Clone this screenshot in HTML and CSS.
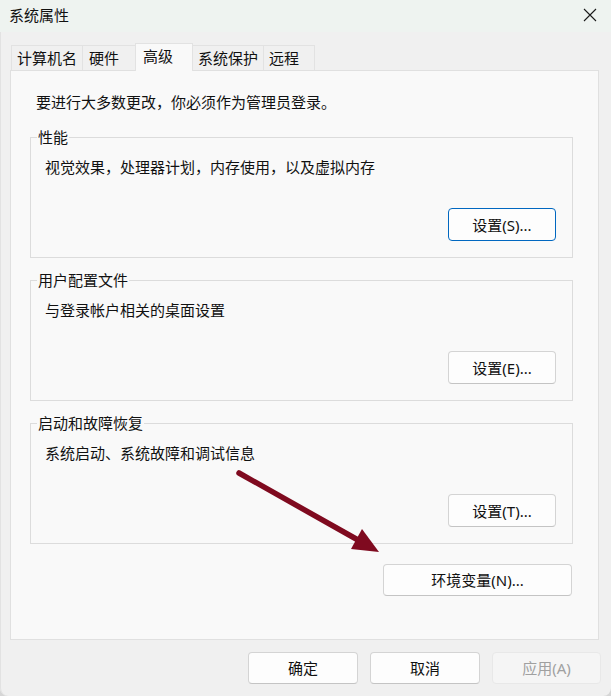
FILE: index.html
```html
<!DOCTYPE html>
<html lang="zh-CN">
<head>
<meta charset="utf-8">
<title>系统属性</title>
<link rel="stylesheet" href="styles.css">
</head>
<body>
<div class="window">
  <div class="titlebar">
    <span class="title">系统属性</span>
    <span class="close" aria-label="关闭">
      <svg width="14" height="14" viewBox="0 0 14 14"><path d="M1 1 L13 13 M13 1 L1 13" stroke="#1a1a1a" stroke-width="1.1" fill="none"/></svg>
    </span>
  </div>
  <div class="tabs">
    <div class="tab">计算机名</div>
    <div class="tab">硬件</div>
    <div class="tab active">高级</div>
    <div class="tab">系统保护</div>
    <div class="tab">远程</div>
  </div>
  <div class="panel">
    <p class="intro">要进行大多数更改，你必须作为管理员登录。</p>
    <fieldset class="group">
      <legend>性能</legend>
      <p class="desc">视觉效果，处理器计划，内存使用，以及虚拟内存</p>
      <div class="actions"><button class="btn setting default">设置(S)...</button></div>
    </fieldset>
    <fieldset class="group">
      <legend>用户配置文件</legend>
      <p class="desc">与登录帐户相关的桌面设置</p>
      <div class="actions"><button class="btn setting">设置(E)...</button></div>
    </fieldset>
    <fieldset class="group">
      <legend>启动和故障恢复</legend>
      <p class="desc">系统启动、系统故障和调试信息</p>
      <div class="actions"><button class="btn setting">设置(T)...</button></div>
    </fieldset>
    <div class="env-row"><button class="btn env">环境变量(N)...</button></div>
  </div>
  <div class="footer">
    <button class="btn dlg">确定</button>
    <button class="btn dlg">取消</button>
    <button class="btn dlg disabled">应用(A)</button>
  </div>
  <svg class="arrow" width="611" height="696" viewBox="0 0 611 696">
    <line x1="239" y1="473" x2="358" y2="540" stroke="#7f0a1f" stroke-width="5.5" stroke-linecap="round"/>
    <polygon points="379,552 351,549 362,529" fill="#7f0a1f"/>
  </svg>
</div>
</body>
</html>
```
FILE: styles.css
```css
html, body {
  margin: 0;
  padding: 0;
  background: #d6d6d6;
}
body {
  font-family: "Noto Sans", "Noto Sans CJK SC", sans-serif;
  font-size: 15px;
  line-height: 20px;
  color: #111111;
}
.window {
  position: relative;
  width: 611px;
  height: 696px;
  box-sizing: border-box;
  background: #f0f0f0;
  box-shadow: inset 1px 0 0 #e2e2e2;
  border-radius: 0 0 8px 8px;
  display: flex;
  flex-direction: column;
  overflow: hidden;
}
.titlebar {
  height: 32px;
  flex: none;
  background: #eef3f0;
  display: flex;
  align-items: center;
  justify-content: space-between;
  padding: 0 14px 2px 9px;
  box-sizing: border-box;
}
.title { font-size: 15px; }
.close { display: flex; width: 14px; height: 14px; }
.tabs {
  flex: none;
  height: 27px;
  margin-top: 11px;
  padding-left: 11px;
  display: flex;
  align-items: flex-end;
}
.tab {
  position: relative;
  box-sizing: border-box;
  height: 25px;
  min-width: 51px;
  padding: 0 5px 0 5px;
  border: 1px solid #e2e2e2;
  border-bottom: none;
  border-left: none;
  background: #f0f0f0;
  line-height: 24px;
  white-space: nowrap;
  flex: none;
}
.tab:first-child { border-left: 1px solid #e2e2e2; }
.tab:nth-child(2) { width: 53px; padding-left: 6px; }
.tab.active {
  z-index: 1;
  height: 28px;
  width: 58px;
  margin-left: -1px;
  margin-bottom: -1px;
  padding-left: 7px;
  border-left: 1px solid #e2e2e2;
  background: #f9f9f9;
  line-height: 24px;
}
.panel {
  flex: none;
  height: 570px;
  box-sizing: border-box;
  margin: 0 12px 0 10px;
  padding: 21px 25px 0 19px;
  background: #f9f9f9;
  border: 1px solid #e0e0e0;
}
.intro { margin: 0 0 15px 6px; }
.group {
  margin: 0;
  padding: 0 16px 16px 6px;
  min-width: 0;
  border: 1px solid #dcdcdc;
}
.group + .group { margin-top: 12px; }
.group legend {
  padding: 0 1px;
  line-height: 20px;
}
.desc { margin: 10px 0 0 8px; }
.actions {
  margin-top: 31px;
  display: flex;
  justify-content: flex-end;
}
.btn {
  font-family: "Noto Sans", "Noto Sans CJK SC", sans-serif;
  font-size: 15px;
  line-height: 20px;
  color: #111111;
  background: #fdfdfd;
  border: 1px solid #d4d4d4;
  border-bottom-color: #c4c4c4;
  border-radius: 4px;
  box-sizing: border-box;
  padding: 0;
  display: flex;
  align-items: center;
  justify-content: center;
}
.btn.setting { width: 108px; height: 33px; }
.btn.default { border: 1px solid #0067c0; }
.env-row {
  margin-top: 20px;
  padding-right: 1px;
  display: flex;
  justify-content: flex-end;
}
.btn.env { width: 189px; height: 32px; }
.footer {
  flex: none;
  display: flex;
  justify-content: flex-end;
  gap: 12px;
  margin-top: 12px;
  padding-right: 10px;
}
.btn.dlg { width: 110px; height: 32px; }
.btn.disabled {
  width: 109px;
  background: #f5f5f5;
  border-color: #e8e8e8;
  color: #a0a0a0;
}
.arrow {
  position: absolute;
  left: 0;
  top: 0;
  pointer-events: none;
}
```
